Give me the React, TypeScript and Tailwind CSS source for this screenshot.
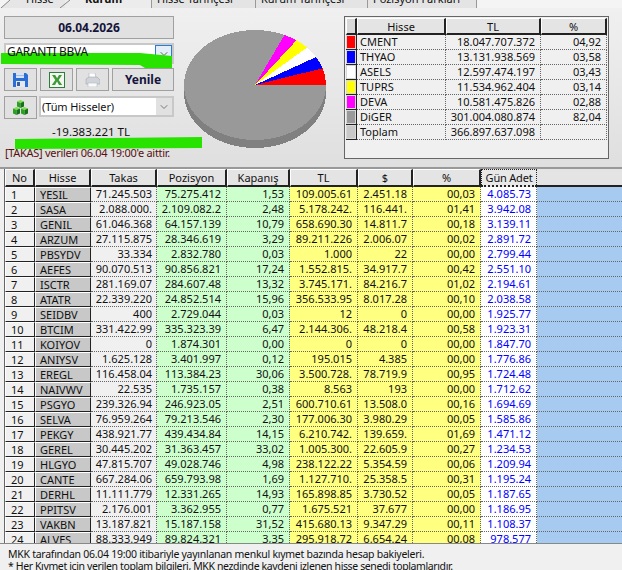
import { ChevronDown } from "lucide-react";

const rows = [
  ["1", "YESIL", "71.245.503", "75.275.412", "1,53", "109.005.61", "2.451.18", "00,03", "4.085.73"],
  ["2", "SASA", "2.088.000.", "2.109.082.2", "2,48", "5.178.242.", "116.441.", "01,41", "3.942.08"],
  ["3", "GENIL", "61.046.368", "64.157.139", "10,79", "658.690.30", "14.811.7", "00,18", "3.139.11"],
  ["4", "ARZUM", "27.115.875", "28.346.619", "3,29", "89.211.226", "2.006.07", "00,02", "2.891.72"],
  ["5", "PBSYDV", "33.334", "2.832.780", "0,03", "1.000", "22", "00,00", "2.799.44"],
  ["6", "AEFES", "90.070.513", "90.856.821", "17,24", "1.552.815.", "34.917.7", "00,42", "2.551.10"],
  ["7", "ISCTR", "281.169.07", "284.607.48", "13,32", "3.745.171.", "84.216.7", "01,02", "2.194.61"],
  ["8", "ATATR", "22.339.220", "24.852.514", "15,96", "356.533.95", "8.017.28", "00,10", "2.038.58"],
  ["9", "SEIDBV", "400", "2.729.044", "0,03", "12", "0", "00,00", "1.925.77"],
  ["10", "BTCIM", "331.422.99", "335.323.39", "6,47", "2.144.306.", "48.218.4", "00,58", "1.923.31"],
  ["11", "KOIYOV", "0", "1.874.301", "0,00", "0", "0", "00,00", "1.847.70"],
  ["12", "ANIYSV", "1.625.128", "3.401.997", "0,12", "195.015", "4.385", "00,00", "1.776.86"],
  ["13", "EREGL", "116.458.04", "113.384.23", "30,06", "3.500.728.", "78.719.9", "00,95", "1.724.48"],
  ["14", "NAIVWV", "22.535", "1.735.157", "0,38", "8.563", "193", "00,00", "1.712.62"],
  ["15", "PSGYO", "239.326.94", "246.923.05", "2,51", "600.710.61", "13.508.0", "00,16", "1.694.69"],
  ["16", "SELVA", "76.959.264", "79.213.546", "2,30", "177.006.30", "3.980.29", "00,05", "1.585.86"],
  ["17", "PEKGY", "438.921.77", "439.434.84", "14,15", "6.210.742.", "139.659.", "01,69", "1.471.12"],
  ["18", "GEREL", "30.445.202", "31.363.457", "33,02", "1.005.300.", "22.605.9", "00,27", "1.234.53"],
  ["19", "HLGYO", "47.815.707", "49.028.746", "4,98", "238.122.22", "5.354.59", "00,06", "1.209.94"],
  ["20", "CANTE", "667.284.06", "659.793.98", "1,69", "1.127.710.", "25.358.5", "00,31", "1.195.24"],
  ["21", "DERHL", "11.111.779", "12.331.265", "14,93", "165.898.85", "3.730.52", "00,05", "1.187.65"],
  ["22", "PPITSV", "2.176.001", "3.362.955", "0,77", "1.675.521", "37.677", "00,00", "1.186.95"],
  ["23", "VAKBN", "13.187.821", "15.187.158", "31,52", "415.680.13", "9.347.29", "00,11", "1.108.37"],
  ["24", "ALVES", "88.333.949", "89.824.321", "3,35", "295.918.72", "6.654.24", "00,08", "978.577"],
];

const legend = [
  ["bg-[#ff0000]", "CMENT", "18.047.707.372", "04,92"],
  ["bg-[#0000ff]", "THYAO", "13.131.938.569", "03,58"],
  ["bg-[#ffffff]", "ASELS", "12.597.474.197", "03,43"],
  ["bg-[#ffff00]", "TUPRS", "11.534.962.404", "03,14"],
  ["bg-[#ff00ff]", "DEVA", "10.581.475.826", "02,88"],
  ["bg-[#999999]", "DiGER", "301.004.080.874", "82,04"],
  ["bg-[#c8c8c8]", "Toplam", "366.897.637.098", ""],
];

const headers = [
  ["No", "w-[30px]"],
  ["Hisse", "w-[56px]"],
  ["Takas", "w-[66px]"],
  ["Pozisyon", "w-[70px]"],
  ["Kapanış", "w-[63px]"],
  ["TL", "w-[68px]"],
  ["$", "w-[55px]"],
  ["%", "w-[68px]"],
];

const raised = "border-t border-l border-t-white border-l-white border-b-2 border-r-2 border-b-[#222] border-r-[#222]";
const fixedCell = "border-t border-l border-t-white border-l-white border-b border-r border-b-[#222] border-r-[#222]";
const dataCell = "text-right border-b border-r border-dotted border-[#666] whitespace-nowrap overflow-hidden";

function ToolButton({ className, children }: { className: string; children: React.ReactNode }) {
  return (
    <div className={`h-[23px] border border-[#a0a0a0] bg-[#e1e1e1] flex items-center justify-center ${className}`}>
      {children}
    </div>
  );
}

function Floppy() {
  return (
    <svg width="15" height="15" viewBox="0 0 15 15">
      <path d="M0 1h13l2 2v12H0z" fill="#2a6fd6" />
      <rect x="3" y="1" width="8" height="5" fill="#d8e4f6" />
      <rect x="3" y="3" width="8" height="1" fill="#9fbbe6" />
      <rect x="3" y="9" width="9" height="6" fill="#e6e9ef" />
      <rect x="4" y="10" width="3" height="4" fill="#3a5f9e" />
    </svg>
  );
}

function Excel() {
  return (
    <svg width="16" height="16" viewBox="0 0 16 16">
      <rect x="0.5" y="0.5" width="15" height="15" fill="#f2f7f0" stroke="#2f7d3c" />
      <path d="M3 3h3.2l1.9 3.2L10 3h3l-3.3 4.9L13.2 13H10L8 9.6 6 13H2.8l3.5-5.1z" fill="#3f9a3a" />
    </svg>
  );
}

function Printer() {
  return (
    <svg width="15" height="14" viewBox="0 0 15 14">
      <path d="M4 0h6l1 5H4z" fill="#fff" stroke="#b4bac2" strokeWidth="0.7" />
      <path d="M1 6l3-2h8l3 3v4H1z" fill="#d0d4da" stroke="#a2a8b0" strokeWidth="0.6" />
      <rect x="3" y="10" width="9" height="4" fill="#fafafa" stroke="#b4bac2" strokeWidth="0.6" />
    </svg>
  );
}

function Cube({ x, y }: { x: number; y: number }) {
  return (
    <g transform={`translate(${x} ${y})`}>
      <path d="M0 1.5L3.5 0L7 1.5L3.5 3z" fill="#7be04f" />
      <path d="M0 1.5L3.5 3V8L0 6.5z" fill="#2f9e26" />
      <path d="M7 1.5L3.5 3V8L7 6.5z" fill="#17701a" />
    </g>
  );
}

function Cubes() {
  return (
    <svg width="15" height="15" viewBox="0 0 15 15">
      <Cube x={4} y={0} />
      <Cube x={0} y={7} />
      <Cube x={8} y={7} />
    </svg>
  );
}

function Pie() {
  const cx = 71;
  const cy = 55;
  const r = 71;
  const ry = 55;
  const slices: [number, number, string][] = [
    [0, 17.7, "#ff0000"],
    [17.7, 30.6, "#0000ff"],
    [30.6, 43, "#ffffff"],
    [43, 54.3, "#ffff00"],
    [54.3, 65.5, "#ff00ff"],
    [65.5, 360, "#999999"],
  ];
  const point = (a: number) => {
    const t = (a * Math.PI) / 180;
    return `${cx + r * Math.cos(t)} ${cy - ry * Math.sin(t)}`;
  };
  return (
    <svg width="143" height="119" viewBox="0 0 143 119" shapeRendering="crispEdges">
      <ellipse cx={cx} cy={cy + 8} rx={r} ry={ry} fill="#808080" />
      {slices.map(([from, to, color]) => (
        <path
          key={color}
          d={`M${cx} ${cy}L${point(from)}A${r} ${ry} 0 ${to - from > 180 ? 1 : 0} 0 ${point(to)}Z`}
          fill={color}
        />
      ))}
    </svg>
  );
}

export default function App() {
  return (
    <div className="w-[622px] h-[570px] overflow-hidden flex flex-col bg-[#f0f0f0] text-[11px] text-[#111] font-['Noto_Sans',sans-serif]">
      {/* tabs, cut off by the top of the crop */}
      <div className="relative h-[8px] shrink-0 bg-[#f4f4f4] flex overflow-hidden text-[11px] leading-[12px]">
        <div className="w-[65px] bg-[#e6e6e6] pl-[26px]"><div className="-mt-[7px]">Hisse</div></div>
        <div className="w-[87px] border-r border-[#999] bg-[#ececec] pl-[20px] font-bold"><div className="-mt-[7px]">Kurum</div></div>
        <div className="w-[104px] border-r border-[#999] bg-[#e4e4e4] pl-[5px]"><div className="-mt-[7px]">Hisse Tarihçesi</div></div>
        <div className="w-[112px] border-r border-[#999] bg-[#e4e4e4] pl-[5px]"><div className="-mt-[7px]">Kurum Tarihçesi</div></div>
        <div className="w-[109px] border-r border-[#999] bg-[#e4e4e4] pl-[5px]"><div className="-mt-[7px]">Pozisyon Farkları</div></div>
        <svg className="absolute left-0 top-0" width="72" height="8" viewBox="0 0 72 8">
          <path d="M0 8L0 8L10 0H0z" fill="#f4f4f4" />
          <path d="M1 8L10 0M60 8L70 0" stroke="#888" fill="none" />
        </svg>
      </div>

      {/* top panel */}
      <div className="relative h-[159px] shrink-0 flex bg-gradient-to-b from-[#f0f0f0] to-[#dfdfdf] pl-[4px] pt-[8px]">
        <div className="w-[170px] shrink-0 flex flex-col">
          <div className="h-[23px] border border-[#a0a0a0] bg-[#e1e1e1] flex items-center justify-center text-[12px] font-bold text-[#14143c]">
            06.04.2026
          </div>
          <div className="mt-[4px] h-[21px] border-2 border-[#c8c8c8] bg-white flex items-center pl-[1px]">
            <span className="relative z-10 flex-1 text-[12px] leading-none -mt-[3px] tracking-[-0.3px]">GARANTI BBVA</span>
            <div className="w-[17px] h-full border border-[#2b7cd3] bg-[#e4eef8] flex items-center justify-center">
              <ChevronDown size={12} strokeWidth={1.5} className="text-[#333]" />
            </div>
          </div>
          <div className="mt-[4px] flex gap-[3px]">
            <ToolButton className="w-[33px]"><Floppy /></ToolButton>
            <ToolButton className="w-[33px]"><Excel /></ToolButton>
            <ToolButton className="w-[33px]"><Printer /></ToolButton>
            <ToolButton className="flex-1 text-[12px] font-bold text-[#14143c]">Yenile</ToolButton>
          </div>
          <div className="mt-[5px] flex gap-[2px]">
            <ToolButton className="w-[33px] h-[21px]"><Cubes /></ToolButton>
            <div className="flex-1 h-[21px] border-2 border-[#c8c8c8] bg-white flex items-center pl-[1px]">
              <span className="flex-1 text-[11px] leading-none tracking-[-0.1px]">(Tüm Hisseler)</span>
              <div className="w-[16px] h-full bg-[#e1e1e1] flex items-center justify-center">
                <ChevronDown size={12} strokeWidth={1.5} className="text-[#555]" />
              </div>
            </div>
          </div>
          <div className="mt-[5px] text-center text-[11.5px] leading-[16px] pl-[4px]">-19.383.221 TL</div>
          <div className="relative z-10 mt-[6px] ml-[1px] text-[11px] leading-[14px] tracking-[-0.3px] whitespace-nowrap text-[#5a1010]">
            [TAKAS] verileri 06.04 19:00'e aittir.
          </div>
        </div>

        <div className="ml-[10px] mt-[14px] shrink-0">
          <Pie />
        </div>

        {/* legend grid */}
        <div className="ml-[17px] w-[265px] h-[143px] shrink-0 border border-[#666] bg-[#f0f0f0] p-px self-start">
          <div className="flex h-[17px] leading-[15px] text-center">
            <div className={`w-[11px] bg-[#d8d8d8] ${raised}`} />
            <div className={`w-[89px] bg-[#e4e4e4] ${raised}`}>Hisse</div>
            <div className={`w-[95px] bg-[#e4e4e4] ${raised}`}>TL</div>
            <div className={`w-[66px] bg-[#e4e4e4] ${raised}`}>%</div>
          </div>
          {legend.map(([color, name, tl, pct]) => (
            <div key={name} className="flex h-[15px] leading-[14px]">
              <div className="w-[11px] border-b border-r border-[#222] bg-[#d8d8d8] p-px">
                <div className={`h-full w-full ${color}`} />
              </div>
              <div className="w-[89px] pl-[3px] border-b border-r border-dotted border-[#666]">{name}</div>
              <div className={`w-[95px] pr-[5px] ${dataCell}`}>{tl}</div>
              <div className={`w-[66px] pr-[5px] ${dataCell}`}>{pct}</div>
            </div>
          ))}
        </div>

        {/* highlighter marks drawn over the screenshot */}
        <svg className="absolute left-0 top-0 pointer-events-none" width="210" height="159" viewBox="0 0 210 159">
          <path d="M1 45L140 45L172 48L172 60L145 60L140 57L1 56z" fill="#28e200" />
          <path d="M15 131L202 129L202 140L15 141z" fill="#28e200" />
        </svg>
      </div>

      {/* main grid */}
      <div className="flex-1 min-h-0 overflow-hidden border-t-2 border-[#999] pl-[4px]">
        <div className="flex h-[18px] leading-[15px] text-center">
          <div className="w-px bg-[#666]" />
          {headers.map(([label, width]) => (
            <div key={label + width} className={`${width} bg-[#e4e4e4] ${raised}`}>{label}</div>
          ))}
          <div className="w-[56px] bg-[#e8e8e8] border border-dotted border-[#222] border-b-2 border-b-[#222] tracking-[-0.2px]">Gün Adet</div>
          <div className="flex-1 bg-[#e4e4e4] border-b-2 border-[#222]" />
        </div>
        {rows.map((row) => (
          <div key={row[0]} className="flex h-[15px] leading-[13px]">
            <div className="w-px bg-[#666]" />
            <div className={`w-[30px] pl-[5px] bg-[#f0f0f0] ${fixedCell}`}>{row[0]}</div>
            <div className={`w-[56px] pl-[4px] bg-[#c8c8c8] ${fixedCell}`}>{row[1]}</div>
            <div className={`w-[66px] pr-[4px] bg-[#f0f0f0] ${dataCell}`}>{row[2]}</div>
            <div className={`w-[70px] pr-[5px] bg-[#ccffcc] ${dataCell}`}>{row[3]}</div>
            <div className={`w-[63px] pr-[5px] bg-[#ccffcc] ${dataCell}`}>{row[4]}</div>
            <div className={`w-[68px] pr-[5px] bg-[#ffff80] ${dataCell}`}>{row[5]}</div>
            <div className={`w-[55px] pr-[5px] bg-[#ffff80] ${dataCell}`}>{row[6]}</div>
            <div className={`w-[68px] pr-[5px] bg-[#ffff80] ${dataCell}`}>{row[7]}</div>
            <div className={`w-[56px] pr-[5px] bg-white text-[#0000ff] ${dataCell}`}>{row[8]}</div>
            <div className="flex-1 bg-[#a6caf0] border-b border-dotted border-[#666]" />
          </div>
        ))}
      </div>

      {/* footnotes */}
      <div className="h-[27px] shrink-0 border-t border-[#888] bg-[#f0f0f0] pl-[8px] pt-[4px] text-[10.5px] leading-[12px] whitespace-nowrap overflow-hidden">
        <div className="tracking-[-0.27px]">MKK tarafından 06.04 19:00 itibariyle yayınlanan menkul kıymet bazında hesap bakiyeleri.</div>
        <div className="tracking-[-0.38px]">* Her Kıymet için verilen toplam bilgileri, MKK nezdinde kaydeni izlenen hisse senedi toplamlarıdır.</div>
      </div>
    </div>
  );
}
